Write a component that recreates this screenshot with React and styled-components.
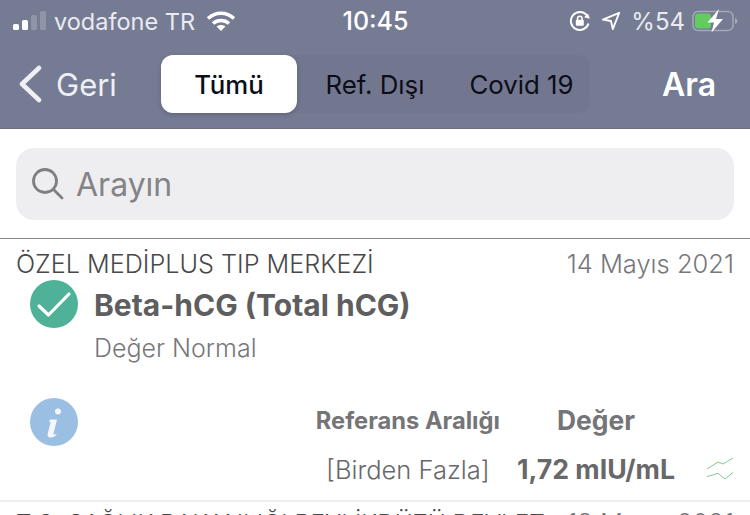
import React from "react";
import styled, { createGlobalStyle } from "styled-components";

const Global = createGlobalStyle`
  html, body { margin: 0; padding: 0; background: #fff; }
  body { font-family: Inter, "Liberation Sans", sans-serif; }
`;

const Page = styled.div`
  width: 750px;
  height: 515px;
  overflow: hidden;
  background: #fff;
`;

const Header = styled.header`
  height: 128px;
  background: #767b94;
  border-bottom: 1px solid #6d6f7c;
  color: #fff;
`;

const StatusBar = styled.div`
  height: 42px;
  display: grid;
  grid-template-columns: 1fr auto 1fr;
  align-items: center;
  padding: 0 12px 0 13px;
`;

const StatusLeft = styled.div`
  display: flex;
  align-items: center;
  gap: 8px;
`;

const StatusRight = styled.div`
  display: flex;
  align-items: center;
  justify-content: flex-end;
  gap: 10px;
`;

const Carrier = styled.span`
  font-size: 23.500px;
  color: #e9ebf1;
  margin-right: 3px;
`;

const Clock = styled.span`
  font-size: 25px;
  font-weight: 500;
`;

const Percent = styled.span`
  font-size: 24px;
  color: #e9ebf1;
  margin-right: -3px;
`;

const NavBar = styled.nav`
  height: 86px;
  display: flex;
  align-items: flex-start;
  padding: 13px 34px 0 17px;
`;

const BackLink = styled.div`
  width: 144px;
  height: 58px;
  display: flex;
  align-items: center;
  gap: 13px;
  font-size: 31px;
  color: #eef0f4;
`;

const Segments = styled.div`
  display: flex;
  height: 58px;
  border-radius: 12px;
  background: #72778f;
`;

const Segment = styled.div`
  width: ${(p) => p.$w}px;
  display: flex;
  align-items: center;
  justify-content: center;
  font-size: 25.800px;
  font-weight: ${(p) => (p.$active ? 500 : 400)};
  color: #0b0d18;
  border-radius: 12px;
  background: ${(p) => (p.$active ? "#fff" : "transparent")};
  box-shadow: ${(p) => (p.$active ? "0 2px 5px rgba(0,0,0,.18)" : "none")};
`;

const SearchAction = styled.div`
  margin-left: auto;
  height: 58px;
  display: flex;
  align-items: center;
  font-size: 32px;
  font-weight: 600;
`;

const SearchArea = styled.div`
  height: 110px;
  box-sizing: border-box;
  padding: 19px 16px 0;
  border-bottom: 1px solid #85858a;
`;

const SearchBox = styled.div`
  height: 72px;
  display: flex;
  align-items: center;
  gap: 11px;
  padding: 0 15px;
  border-radius: 18px;
  background: #eeeef0;
  color: #838388;
  font-size: 32px;
`;

const Row = styled.section`
  height: 263px;
  box-sizing: border-box;
  padding: 10px 16px 0;
  border-bottom: 2px solid #efefef;
`;

const RowHead = styled.div`
  display: flex;
  justify-content: space-between;
  font-size: 25.200px;
  font-weight: 300;
  line-height: 30px;
  color: #48484a;
`;

const DateText = styled.span`
  font-size: 25.500px;
  color: #77777b;
`;

const Result = styled.div`
  display: flex;
  gap: 16px;
  padding: 1px 0 0 14px;
`;

const TestName = styled.div`
  font-size: 30px;
  line-height: 50px;
  font-weight: 700;
  color: #5e5e60;
`;

const TestState = styled.div`
  font-size: 25px;
  line-height: 36px;
  font-weight: 300;
  color: #77777a;
`;

const Detail = styled.div`
  display: flex;
  padding: 32px 0 0 14px;
`;

const Table = styled.div`
  margin-left: auto;
  margin-top: 6px;
  margin-right: -1px;
  display: grid;
  grid-template-columns: auto auto 43px;
  column-gap: 17px;
  row-gap: 17px;
  justify-items: center;
  align-items: center;
`;

const ColTitle = styled.div`
  font-size: ${(p) => p.$size}px;
  font-weight: 700;
  color: #757577;
`;

const RangeValue = styled.div`
  font-size: 25.500px;
  font-weight: 300;
  color: #68686b;
`;

const ResultValue = styled.div`
  font-size: 26.700px;
  font-weight: 700;
  color: #68686a;
`;

const TrendCell = styled.div`
  justify-self: end;
  height: 26px;
`;

const NextRow = styled.div`
  display: flex;
  justify-content: space-between;
  padding: 6px 16px 0;
  font-size: 24.400px;
  font-weight: 300;
  line-height: 30px;
  color: #48484a;
  white-space: nowrap;
`;

const Signal = () => (
  <svg width="33" height="20" viewBox="0 0 33 20">
    <rect x="0" y="13" width="6" height="6" rx="1.500" fill="#fff" />
    <rect x="9" y="9" width="6" height="10" rx="1.500" fill="#fff" />
    <rect x="18" y="4" width="6" height="15" rx="1.500" fill="#9094a9" />
    <rect x="27" y="0" width="6" height="19" rx="1.500" fill="#9094a9" />
  </svg>
);

const Wifi = () => (
  <svg width="30" height="22" viewBox="0 0 30 22" fill="none" stroke="#fff" strokeWidth="3.600">
    <path d="M2 8.500C9.500 1.500 20.500 1.500 28 8.500" />
    <path d="M7 13.500C11.500 9.500 18.500 9.500 23 13.500" />
    <path d="M15 21l-4.400-4.600c2.600-2 6.200-2 8.800 0z" fill="#fff" stroke="none" />
  </svg>
);

const RotationLock = () => (
  <svg width="22" height="22" viewBox="0 0 22 22" fill="none">
    <path d="M19.500 13.500A9 9 0 1 1 18 5.500" stroke="#fff" strokeWidth="2" />
    <path d="M15.500 8h6l-3-4.500z" fill="#fff" transform="rotate(15 18 6)" />
    <rect x="6.800" y="9.800" width="8" height="6" rx="1" fill="#fff" />
    <path d="M8.500 10V8.500a2.300 2.300 0 0 1 4.600 0V10" stroke="#fff" strokeWidth="1.500" />
  </svg>
);

const LocationArrow = () => (
  <svg width="20" height="22" viewBox="0 0 22 22" fill="none">
    <path d="M20 2L2 9.500l9 1.500 2 9z" stroke="#fff" strokeWidth="2" strokeLinejoin="round" />
  </svg>
);

const Battery = () => (
  <svg width="46" height="24" viewBox="0 0 46 24">
    <rect x="1" y="2.500" width="40" height="19" rx="5" fill="none" stroke="#a5a8b9" strokeWidth="1.500" />
    <rect x="3" y="4.500" width="16" height="15" rx="3" fill="#62cc5f" />
    <path d="M43 9v6c1.500-.5 2.500-1.500 2.500-3s-1-2.500-2.500-3z" fill="#a5a8b9" />
    <path d="M27 0L15.500 13.500h6.500l-2.500 10L31 10h-7z" fill="#fff" />
  </svg>
);

const BackChevron = () => (
  <svg width="26" height="38" viewBox="0 0 26 38" fill="none">
    <path d="M22 3L5 19l17 16" stroke="#eef0f4" strokeWidth="4.500" strokeLinecap="round" strokeLinejoin="round" />
  </svg>
);

const SearchIcon = () => (
  <svg width="34" height="34" viewBox="0 0 34 34" fill="none" stroke="#7f7f83" strokeWidth="2.800" strokeLinecap="round">
    <circle cx="14" cy="14" r="11.500" />
    <path d="M23 23l8 8" />
  </svg>
);

const CheckBadge = () => (
  <svg width="48" height="48" viewBox="0 0 48 48" fill="none">
    <circle cx="24" cy="24" r="24" fill="#4fb298" />
    <path d="M9 26l9.500 9L39 14" stroke="#fff" strokeWidth="3.200" strokeLinecap="round" strokeLinejoin="round" />
  </svg>
);

const InfoBadge = () => (
  <svg width="48" height="48" viewBox="0 0 48 48">
    <circle cx="24" cy="24" r="24" fill="#9bbfe2" />
    <circle cx="28" cy="13.500" r="3" fill="#f4f7fb" />
    <path d="M20 21.500h7l-3.500 14c-.3 1.300.7 1.500 3.300.3-1.400 2.800-3.600 3.700-6.100 3.700-2.400 0-3.500-1.400-3-3.700l3-11.800-1.700-.3z" fill="#f4f7fb" />
  </svg>
);

const TrendIcon = () => (
  <svg width="30" height="26" viewBox="0 0 30 26" fill="none" stroke="#7fca93" strokeWidth="1">
    <path d="M2 13l11-7 5 2 10-6" />
    <path d="M2 20.700l11-3.400 7 5.700 8-6.700" />
  </svg>
);

const App = () => {
  return (
    <Page>
      <Global />
      <Header>
        <StatusBar>
          <StatusLeft>
            <Signal />
            <Carrier>vodafone TR</Carrier>
            <Wifi />
          </StatusLeft>
          <Clock>10:45</Clock>
          <StatusRight>
            <RotationLock />
            <LocationArrow />
            <Percent>%54</Percent>
            <Battery />
          </StatusRight>
        </StatusBar>
        <NavBar>
          <BackLink>
            <BackChevron />
            Geri
          </BackLink>
          <Segments>
            <Segment $active $w={136}>Tümü</Segment>
            <Segment $w={156}>Ref. Dışı</Segment>
            <Segment $w={137}>Covid 19</Segment>
          </Segments>
          <SearchAction>Ara</SearchAction>
        </NavBar>
      </Header>
      <SearchArea>
        <SearchBox>
          <SearchIcon />
          Arayın
        </SearchBox>
      </SearchArea>
      <Row>
        <RowHead>
          <span>ÖZEL MEDİPLUS TIP MERKEZİ</span>
          <DateText>14 Mayıs 2021</DateText>
        </RowHead>
        <Result>
          <CheckBadge />
          <div>
            <TestName>Beta-hCG (Total hCG)</TestName>
            <TestState>Değer Normal</TestState>
          </div>
        </Result>
        <Detail>
          <InfoBadge />
          <Table>
            <ColTitle $size={23.7}>Referans Aralığı</ColTitle>
            <ColTitle $size={26.4}>Değer</ColTitle>
            <span />
            <RangeValue>[Birden Fazla]</RangeValue>
            <ResultValue>1,72 mIU/mL</ResultValue>
            <TrendCell>
              <TrendIcon />
            </TrendCell>
          </Table>
        </Detail>
      </Row>
      <NextRow>
        <span>T.C. SAĞLIK BAKANLIĞI BEYLİKDÜZÜ DEVLET</span>
        <DateText>13 Mayıs 2021</DateText>
      </NextRow>
    </Page>
  );
};

export default App;
